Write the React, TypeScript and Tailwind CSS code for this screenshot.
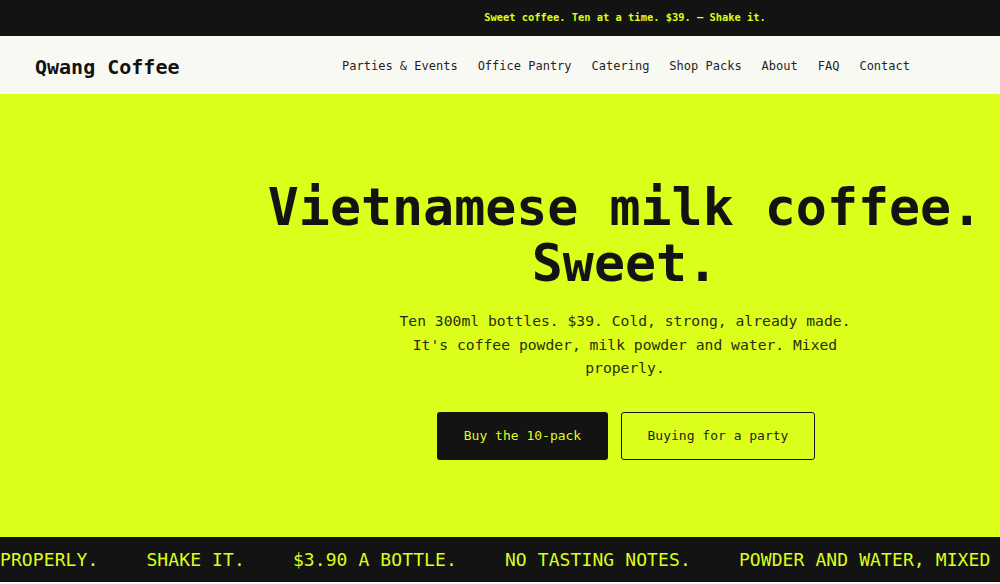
const mono = "font-['DejaVu_Sans_Mono',monospace]";

const navLinks = ["Parties & Events", "Office Pantry", "Catering", "Shop Packs", "About", "FAQ", "Contact"];

const ticker = ["PROPERLY.", "SHAKE IT.", "$3.90 A BOTTLE.", "NO TASTING NOTES.", "POWDER AND WATER, MIXED PROPERLY."];

export default function App() {
  return (
    <div className={`min-h-screen bg-[#f9f9f4] ${mono}`}>
      {/* announcement bar */}
      <div className="flex h-[36px] items-center justify-center bg-[#131313] pl-[250px]">
        <p className="text-[10.4px] font-bold text-[#dbff1a]">
          Sweet coffee. Ten at a time. $39. — Shake it.
        </p>
      </div>

      {/* header */}
      <header className="flex h-[58px] items-center justify-between bg-[#f9f9f4] pl-[35px] pr-[90px]">
        <a className="pt-[3px] text-[20px] font-bold text-[#131313]">Qwang Coffee</a>
        <nav className="flex items-center gap-[20px] pt-[1px]">
          {navLinks.map((link) => (
            <a key={link} className="text-[12px] text-[#1f1f1f]">
              {link}
            </a>
          ))}
        </nav>
      </header>

      {/* hero */}
      <section className="flex h-[443px] flex-col items-center bg-[#dbff1a] pl-[250px] pt-[85px] text-center">
        <h1 className="text-[51.6px] font-bold leading-[56px] text-[#131313]">
          Vietnamese milk coffee.
          <br />
          Sweet.
        </h1>
        <p className="mt-[18px] max-w-[480px] text-[14.7px] leading-[23.5px] text-[#2a2e10]">
          Ten 300ml bottles. $39. Cold, strong, already made. It's coffee powder, milk powder and water. Mixed properly.
        </p>
        <div className="mt-[32px] flex gap-[13px] pl-[2px]">
          <button className="h-[48px] w-[171px] rounded-[3px] bg-[#131313] text-[13px] text-[#dbff1a]">
            Buy the 10-pack
          </button>
          <button className="h-[48px] w-[194px] rounded-[3px] border border-[#131313] text-[13px] text-[#1f1f1f]">
            Buying for a party
          </button>
        </div>
      </section>

      {/* ticker */}
      <div className="flex h-[45px] items-center gap-[48px] overflow-hidden whitespace-nowrap bg-[#131313]">
        {ticker.map((item, i) => (
          <span key={i} className="shrink-0 text-[18px] tracking-[0.1px] text-[#dbff1a]">
            {item}
          </span>
        ))}
      </div>
    </div>
  );
}
